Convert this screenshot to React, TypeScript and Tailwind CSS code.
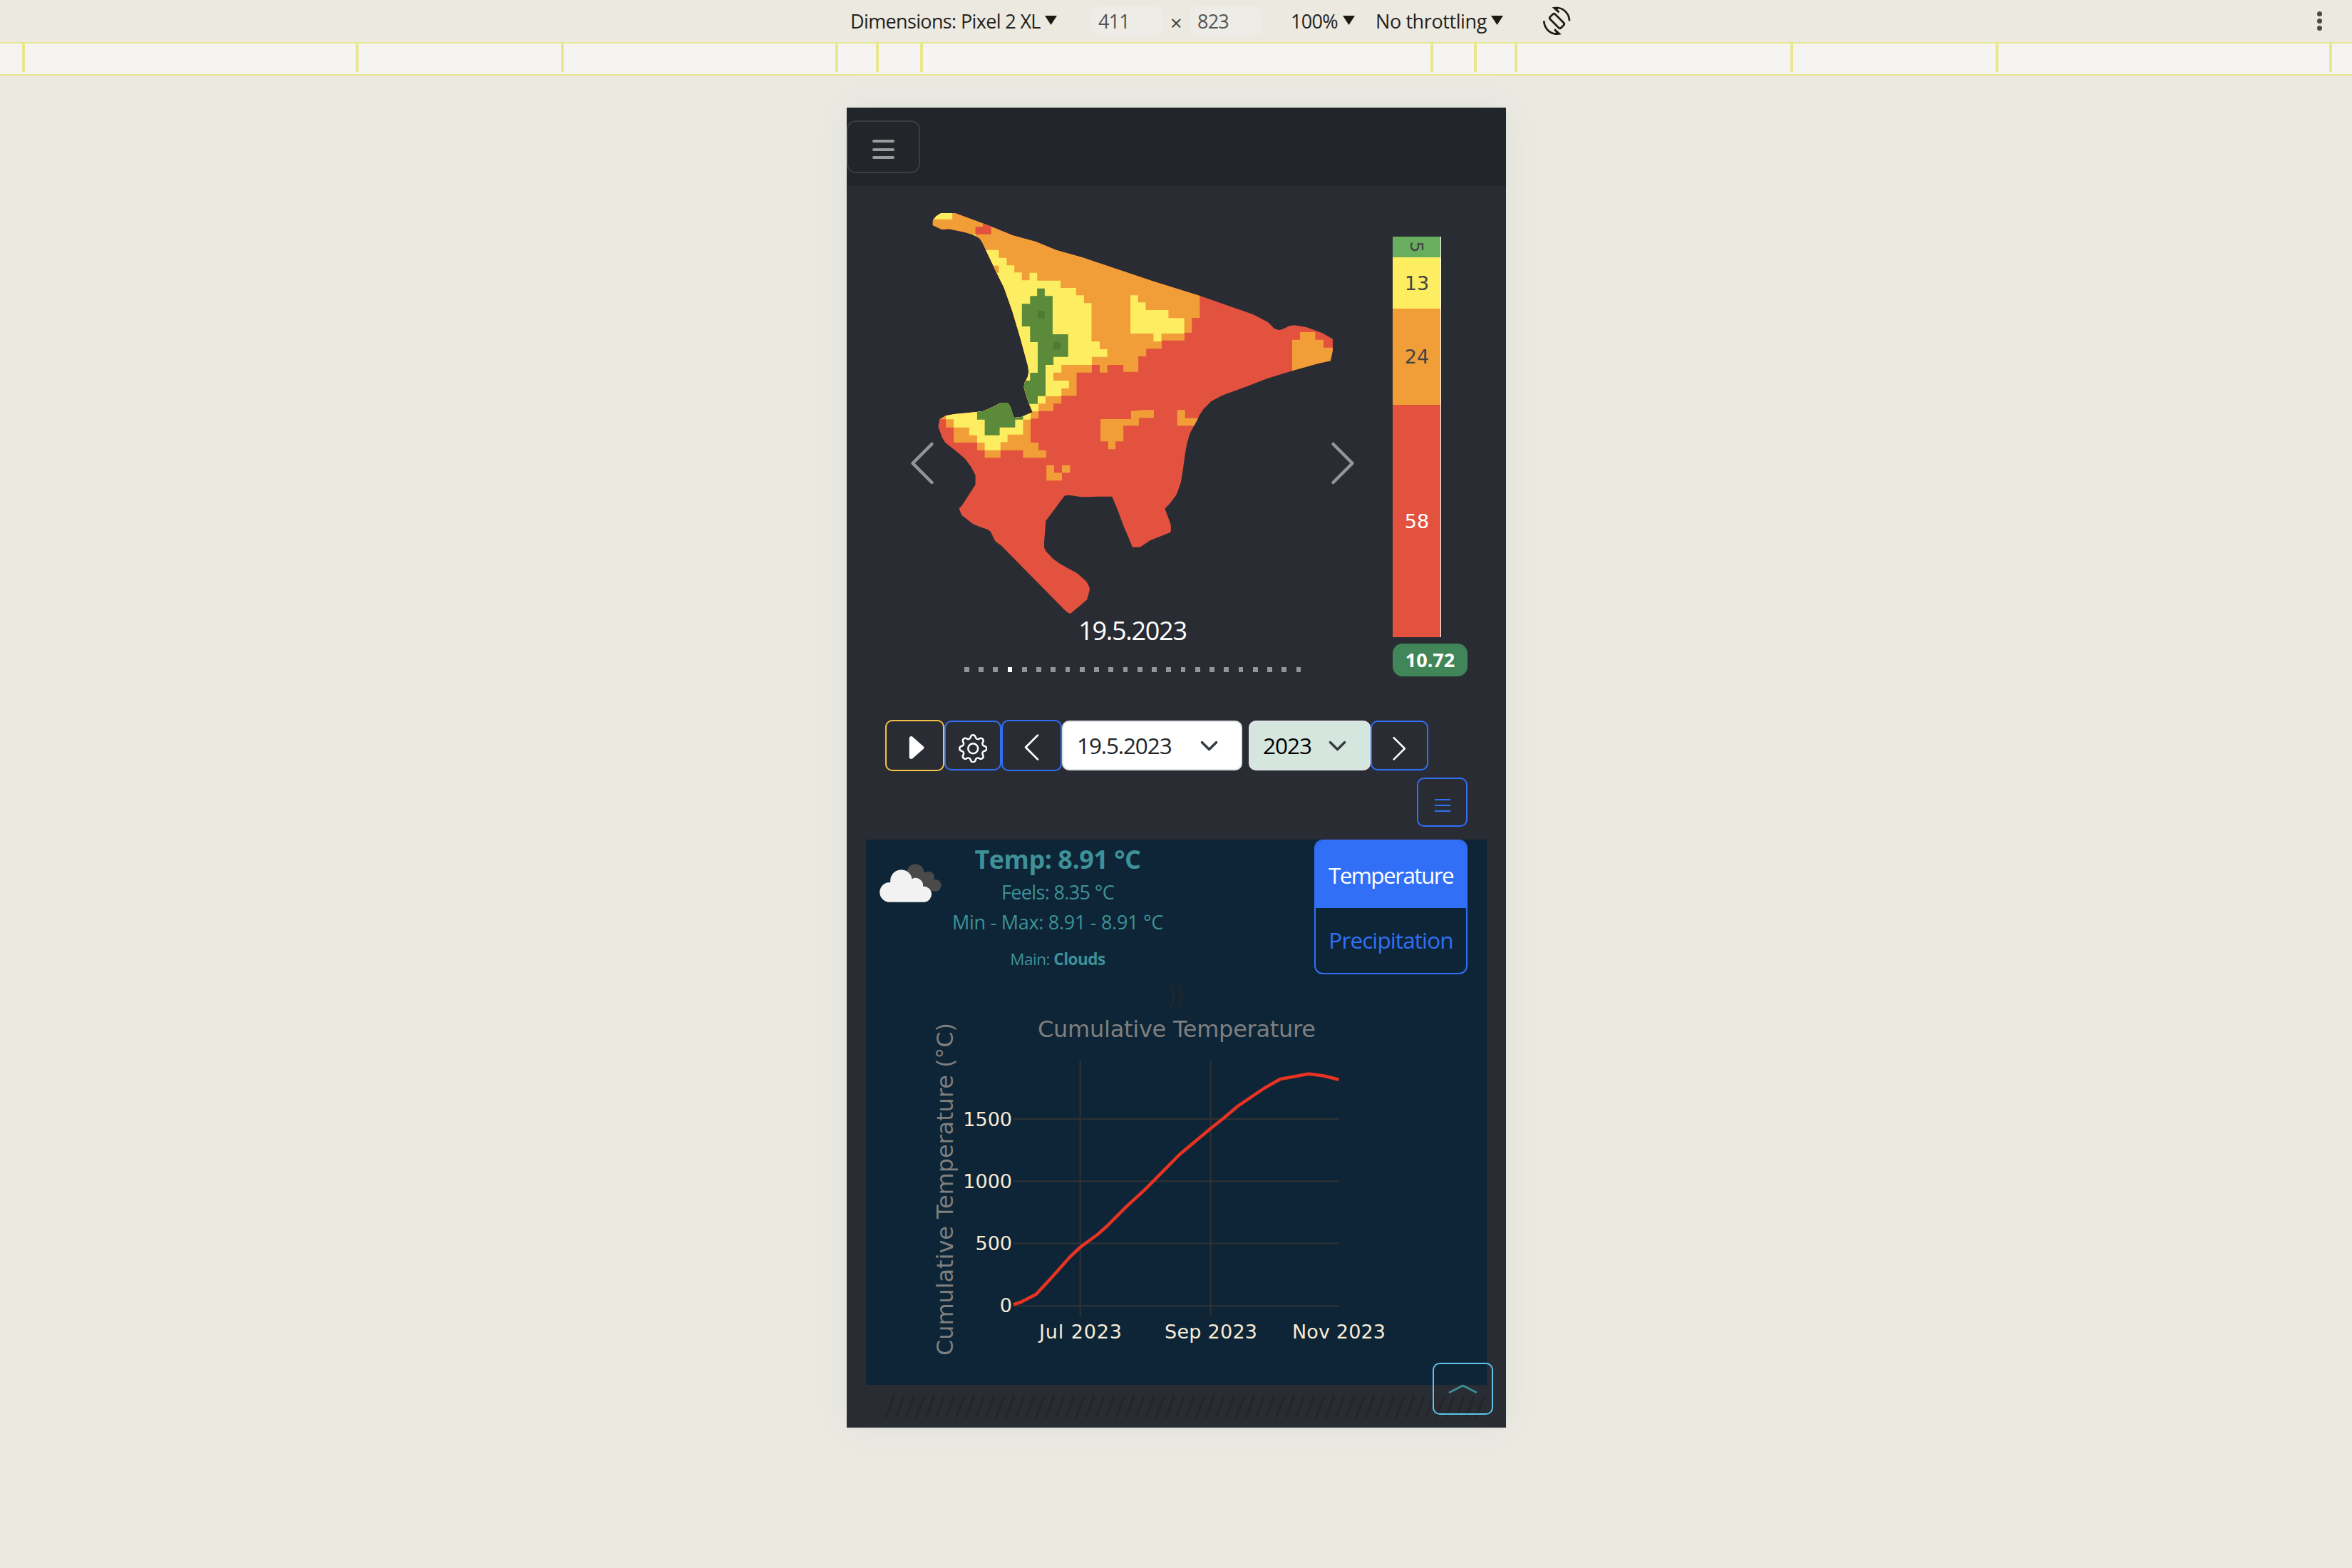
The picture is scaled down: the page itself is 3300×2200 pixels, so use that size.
import React from "react";
import { BsCaretRightFill, BsChevronLeft, BsChevronRight, BsGear } from "react-icons/bs";

const TICKS = [31, 499, 787, 1172, 1229, 1291, 2007, 2068, 2125, 2512, 2800, 3268];

function Caret({ className }: { className: string }) {
  return <span className={`h-[13px] w-[17px] bg-[#1b1b12] [clip-path:polygon(0_0,100%_0,50%_100%)] ${className}`} />;
}

function DeviceToolbar() {
  return (
    <header className="flex h-[59px] items-start text-[27px] leading-[60px] text-[#23221c]">
      <span className="ml-[1193px] w-[268px] whitespace-nowrap tracking-[-0.64px]">Dimensions: Pixel 2 XL</span>
      <Caret className="ml-[5px] mt-[22px]" />
      <span className="ml-[48px] mt-[9px] h-[41px] w-[100px] rounded-[9px] bg-[#edece7] pl-[10px] leading-[42px] tracking-[-0.8px] text-[#565551]">411</span>
      <span className="ml-[11px] w-[18px] text-[29px] leading-[64px] text-[#3f3e39]">×</span>
      <span className="ml-[10px] mt-[9px] h-[41px] w-[100px] rounded-[9px] bg-[#edece7] pl-[10px] leading-[42px] tracking-[-0.8px] text-[#565551]">823</span>
      <span className="ml-[41px] w-[66px] whitespace-nowrap tracking-[-0.7px]">100%</span>
      <Caret className="ml-[7px] mt-[22px]" />
      <span className="ml-[29px] w-[156px] whitespace-nowrap tracking-[-0.4px]">No throttling</span>
      <Caret className="ml-[6px] mt-[22px]" />
      <svg className="ml-[46px] h-[60px] w-[60px]" viewBox="0 0 180 180" fill="none" stroke="#1b1b12" strokeWidth="8">
        <path d="M71 60 60 71q-5 5 0 10l36 36q5 5 10 0l11-11q5-5 0-10L81 60q-5-5-10 0z" />
        <path d="M84 33h8c28 3 49 27 49 55M91 143h-8c-28-3-49-27-49-55" />
        <path d="M68 31l14-2 14 5-5 6 9 9-6 6zM107 145l-14 2-14-5 5-6-9-9 6-6z" fill="#1b1b12" stroke="none" />
      </svg>
      <div className="ml-auto mr-[42px] mt-[16px] flex flex-col gap-[3px]">
        {[0, 1, 2].map((i) => <span key={i} className="h-[7px] w-[7px] rounded-full bg-[#4a4c42]" />)}
      </div>
    </header>
  );
}

function Ruler() {
  return (
    <div className="relative h-[47px] border-y-2 border-[#e9e78d] bg-[#f5f4f2]">
      {TICKS.map((x) => <span key={x} className="absolute top-0 h-[40px] w-[4px] bg-[#e9e78d]" style={{ left: x }} />)}
    </div>
  );
}

const OUTLINE =
  "M72 95 74 85 85 70 102 57H152L200 78 275 111 355 150 440 178 510 212 600 242 700 282 850 342 1020 405 1100 438 1210 484 1262 516 1285 544 1303 550 1320 542 1338 532 1355 529 1380 533 1400 538 1455 562 1492 587V635L1484 679 1440 690 1348 721 1260 753 1190 785 1100 824 1060 850 1035 880 1020 905 1010 930 1000 952 985 985 975 1025 968 1070 960 1140 953 1190 945 1218 937 1243 915 1278 896 1301 915 1360 918 1375 917 1400 885 1415 845 1434 808 1463H781L770 1430 750 1375 730 1310 709 1250H652L630 1252H598L567 1246 550 1244 540 1247 474 1352 468 1440V1465L474 1480 500 1513 525 1534 560 1557 585 1573 618 1608 629 1633V1645L620 1684 562 1742H556L543 1730 315 1456 294 1438 278 1398 268 1389 240 1378 215 1365 175 1328 166 1300 175 1290 224 1200V1160L208 1124 188 1092 165 1068 117 1023 105 1000 95 965 92 955 97 925 118 910 150 903 228 894 250 891 285 873 315 855H338L348 872 360 918 385 916 427 895 415 862 403 822 396 790 398 772 410 745 413 725 410 700 385 590 355 470 325 370 300 310 262 215 248 180 238 163 215 148 185 137 130 124 105 126 72 108Z";

const ORANGE = [
  "M0 0H1020V498H992V560H966V593H885V628H830V660H802V725H749V696H692V728H665V696H637V728H583V826H529V859H501V890H448V922H420V1023H448V1055H475V1087H393V1055H313V1087H257V1055H230V1023H147V959H119V925H60Z",
  "M1376 558H1430V590H1459V623H1500V685L1348 730V590H1376Z",
  "M776 890 820 886H857V919H804V952H749V1018H721V1051H695V1018H668V924H776Z",
  "M940 886H968V920H1030V952H940Z",
  "M476 1118H503V1150H531V1118H560V1150H531V1183H476Z",
];

const YELLOW = [
  "M60 50H142V83H60Z",
  "M200 146H224V165H200Z",
  "M119 925V800H240V212H307V245H335V277H362V307H389V340H416V308H443V341H526V372H581V403H609V436H636V597H665V630H692V662H637V696H529V728H501V762H556V795H529V828H473V859H448V892H420V926H393V989H338V1021H313V1055H257V1023H230V992H202V959H147V925Z",
  "M774 403H801V433H828V465H909V499H965V564H884V597H856V564H774Z",
];

const GREEN = [
  "M443 374H470V406H498V567H553V662H501V696H473V827H445V860H380V762H418V729H445V600H418V534H389V439H418V406H443Z",
  "M230 840H393V926H365V959H310V992H257V926H230Z",
];

function FieldMap() {
  return (
    <svg className="ml-[38px] mt-[19px] block h-[584px] w-[620px]" viewBox="0 0 1568 1752" preserveAspectRatio="none">
      <clipPath id="field"><path d={OUTLINE} /></clipPath>
      <g clipPath="url(#field)">
        <rect width="1568" height="1752" fill="#e2523f" />
        {ORANGE.map((d) => <path key={d} d={d} fill="#f29e38" />)}
        {YELLOW.map((d) => <path key={d} d={d} fill="#fded61" />)}
        {GREEN.map((d) => <path key={d} d={d} fill="#5c8a3b" />)}
        <path d="M250 95V115H224V146H280V95Z" fill="#e2523f" />
        <path d="M260 278H307V308H260Z" fill="#f29e38" />
        <path d="M445 468H470V501H445ZM501 599H526V630H512V633H501Z" fill="#4f7a33" />
      </g>
    </svg>
  );
}

function Carousel() {
  return (
    <div className="relative w-[694px]">
      <FieldMap />
      <BsChevronLeft className="absolute left-[16px] top-[353px] text-[72px] text-[#949599]" />
      <BsChevronRight className="absolute left-[606px] top-[353px] text-[72px] text-[#949599]" />
      <p className="mt-px text-center text-[36px] leading-[40px] tracking-[-1.28px] text-white">19.5.2023</p>
      <div className="mt-[31px] flex justify-center gap-[13.5px]">
        {Array.from({ length: 24 }, (_, i) => (
          <span key={i} className={`h-[7px] w-[6.75px] ${i === 3 ? "bg-white" : "bg-[#949599]"}`} />
        ))}
      </div>
    </div>
  );
}

function IndexBar() {
  return (
    <div className="ml-[18px] pt-[71px]">
      <div className="flex w-[68px] flex-col border-r border-white text-center font-['DejaVu_Sans'] text-[27px] text-[#444]">
        <div className="flex h-[29px] items-center justify-center bg-[#69ad5e]"><span className="rotate-90 text-[25px] leading-none">5</span></div>
        <div className="h-[72px] bg-[#fded61] pl-px leading-[74px]">13</div>
        <div className="h-[135px] bg-[#f29e38] pl-px leading-[135px]">24</div>
        <div className="h-[326px] bg-[#e2523f] pl-px leading-[327px] text-white">58</div>
      </div>
      <div className="mt-[9px] h-[46px] w-[105px] rounded-[14px] bg-[#418658] text-center text-[27px] font-bold leading-[46px] text-white">10.72</div>
    </div>
  );
}

function SelectChevron({ className }: { className: string }) {
  return (
    <svg className={`h-[27px] w-[27px] ${className}`} viewBox="0 0 16 16" fill="none" stroke="#343a40" strokeWidth="2" strokeLinecap="round" strokeLinejoin="round">
      <path d="m2 5 6 6 6-6" />
    </svg>
  );
}

function Controls() {
  return (
    <div className="ml-[54px] flex h-[72px] items-center text-white">
      <button className="flex h-[72px] w-[83px] items-center justify-center rounded-[10px] border-2 border-[#f6c244]"><BsCaretRightFill className="mt-[6px] text-[44px]" /></button>
      <button className="flex h-[70px] w-[80px] items-center justify-center rounded-[10px] border-2 border-[#316ff6]"><BsGear className="mt-[8px] text-[40.5px]" /></button>
      <button className="flex h-[72px] w-[85px] items-center justify-center rounded-[10px] border-2 border-[#316ff6]"><BsChevronLeft className="mt-[5px] text-[45px]" /></button>
      <div className="flex h-[70px] w-[253px] items-center rounded-[10px] border-2 border-[#dee2e6] bg-white pl-[19px] text-[31.5px] text-[#212529]">
        <span className="w-[134px] whitespace-nowrap leading-[68px] tracking-[-1.12px]">19.5.2023</span>
        <SelectChevron className="ml-[38px]" />
      </div>
      <div className="ml-[9px] flex h-[70px] w-[171px] items-center rounded-[10px] border-2 border-[#dee2e6] bg-[#d5e6de] pl-[18px] text-[31.5px] text-black">
        <span className="w-[69px] whitespace-nowrap leading-[68px] tracking-[-1.02px]">2023</span>
        <SelectChevron className="ml-[22px]" />
      </div>
      <button className="flex h-[70px] w-[81px] items-center justify-center rounded-[10px] border-2 border-[#316ff6]"><BsChevronRight className="mt-[8px] text-[40.5px]" /></button>
    </div>
  );
}

function CloudIcon() {
  return (
    <svg className="h-[80px] w-[110px]" viewBox="0 0 330 240">
      <g fill="#4a4a4b"><circle cx="178" cy="73" r="36" /><circle cx="234" cy="92" r="24" /><circle cx="262" cy="127" r="25" /><path d="M160 60 240 75 262 152 200 140z" /></g>
      <path d="M66 197a41 41 0 0 1 7-83 46 46 0 0 1 91-14 31 31 0 0 1 46 31 33 33 0 0 1 6 66z" fill="#f2f2f2" />
    </svg>
  );
}

const GX = [1515.7, 1698.6];
const GY = [1570, 1657.3, 1744.7, 1832];
const LINE = "1421.8,1830.3 1432.3,1827 1453.7,1816 1475,1793 1500.8,1764 1515.5,1750 1540,1732 1553.5,1720 1579.9,1693.3 1606.9,1668.7 1654.8,1620 1698.6,1583.3 1715.4,1570 1737.6,1551.3 1773.5,1527 1796.3,1514 1835.9,1506.7 1856.3,1509.3 1878.5,1514.7";

function Chart() {
  return (
    <svg className="block h-[528px] w-[871px] font-['DejaVu_Sans']" viewBox="1215 1415 871 528">
      <g stroke="#2f3234" strokeWidth="2.25">
        {GX.map((x) => <path key={x} d={`M${x} 1488V1847.7`} />)}
        {GY.map((y) => <path key={y} d={`M1422 ${y}H1879`} />)}
      </g>
      <polyline points={LINE} fill="none" stroke="#e83323" strokeWidth="4.5" strokeLinejoin="round" />
      <g fill="#7f7f7f" fontSize="32">
        <text x="1456" y="1454.5" textLength="390">Cumulative Temperature</text>
        <text transform="translate(1336.5 1902) rotate(-90)" textLength="467">Cumulative Temperature (°C)</text>
      </g>
      <g fill="#faebd7" fontSize="27">
        <g textAnchor="end">
          <text x="1420" y="1579.8">1500</text><text x="1420" y="1667">1000</text><text x="1420" y="1754">500</text><text x="1420" y="1841">0</text>
        </g>
        <text x="1458" y="1877.5" textLength="116">Jul 2023</text>
        <text x="1634" y="1877.5" textLength="130">Sep 2023</text>
        <text x="1813" y="1877.5" textLength="131">Nov 2023</text>
      </g>
    </svg>
  );
}

function WeatherPanel() {
  return (
    <section className="ml-[27px] h-[765px] w-[871px] bg-[#0d2536]">
      <div className="flex h-[197px] items-start">
        <div className="ml-[10px] mt-[22px]"><CloudIcon /></div>
        <div className="flex w-[298px] flex-col items-center whitespace-nowrap text-[27px] text-[#3f9199]">
          <p className="text-[36px] font-bold leading-[56px] tracking-[-0.5px]">Temp: 8.91 °C</p>
          <p className="leading-[36px] tracking-[-0.64px]">Feels: 8.35 °C</p>
          <p className="leading-[47px] tracking-[-0.28px]">Min - Max: 8.91 - 8.91 °C</p>
          <p className="text-[22.5px] leading-[58px] tracking-[-0.5px]">Main: <b>Clouds</b></p>
        </div>
        <div className="ml-auto mr-[27px] flex h-[189px] w-[215px] flex-col overflow-hidden rounded-[12px] border-2 border-[#316ff6] text-center text-[31.5px]">
          <span className="h-[94px] bg-[#316ff6] pt-[3px] leading-[90px] tracking-[-1.6px] text-white">Temperature</span>
          <span className="leading-[90px] tracking-[-0.9px] text-[#316ff6]">Precipitation</span>
        </div>
      </div>
      <p className="text-center text-[36px] leading-[40px] text-[#212529]">{")}"}</p>
      <Chart />
    </section>
  );
}

function Phone() {
  return (
    <main className="relative ml-[1188px] mt-[45px] h-[1852px] w-[925px] bg-[#2a2c34] shadow-[0_0_45px_#dce1dc,0_0_2px_#c9cfcc]">
      <nav className="h-[110px] bg-[#22262a] pt-[18px]">
        <button className="flex h-[74px] w-[103px] flex-col items-center justify-center gap-[7.5px] rounded-[13px] border-2 border-[#3a3d41] pt-[7px]">
          {[0, 1, 2].map((i) => <span key={i} className="h-[4px] w-[31px] rounded-full bg-[#9a9b9d]" />)}
        </button>
      </nav>
      <div className="ml-[54px] flex h-[749px]">
        <Carousel />
        <IndexBar />
      </div>
      <Controls />
      <div className="mb-[18px] ml-[800px] mt-[9px]">
        <button className="flex h-[69px] w-[71px] flex-col items-center justify-center gap-[6px] rounded-[10px] border-2 border-[#316ff6] pt-[9px]">
          {[0, 1, 2].map((i) => <span key={i} className="h-[2px] w-[22px] bg-[#316ff6]" />)}
        </button>
      </div>
      <WeatherPanel />
      <p className="ml-[53px] whitespace-nowrap text-[42px] leading-[60px] tracking-[-1.37px] text-[#22262a]">{"/".repeat(60)}</p>
      <button className="absolute left-[822px] top-[1761px] h-[73px] w-[85px] rounded-[10px] border-2 border-[#5bc4e8]">
        <svg className="mx-auto h-[16px] w-[41px]" viewBox="0 0 41 16" fill="none" stroke="#3d9090" strokeWidth="2.6" strokeLinecap="round" strokeLinejoin="round">
          <path d="m2 12.500 18.500-9.500 18.500 9.500" />
        </svg>
      </button>
    </main>
  );
}

export default function App() {
  return (
    <div className="h-[2200px] w-[3300px] overflow-hidden bg-[#ece9e1] font-['Open_Sans',sans-serif]">
      <DeviceToolbar />
      <Ruler />
      <Phone />
    </div>
  );
}
